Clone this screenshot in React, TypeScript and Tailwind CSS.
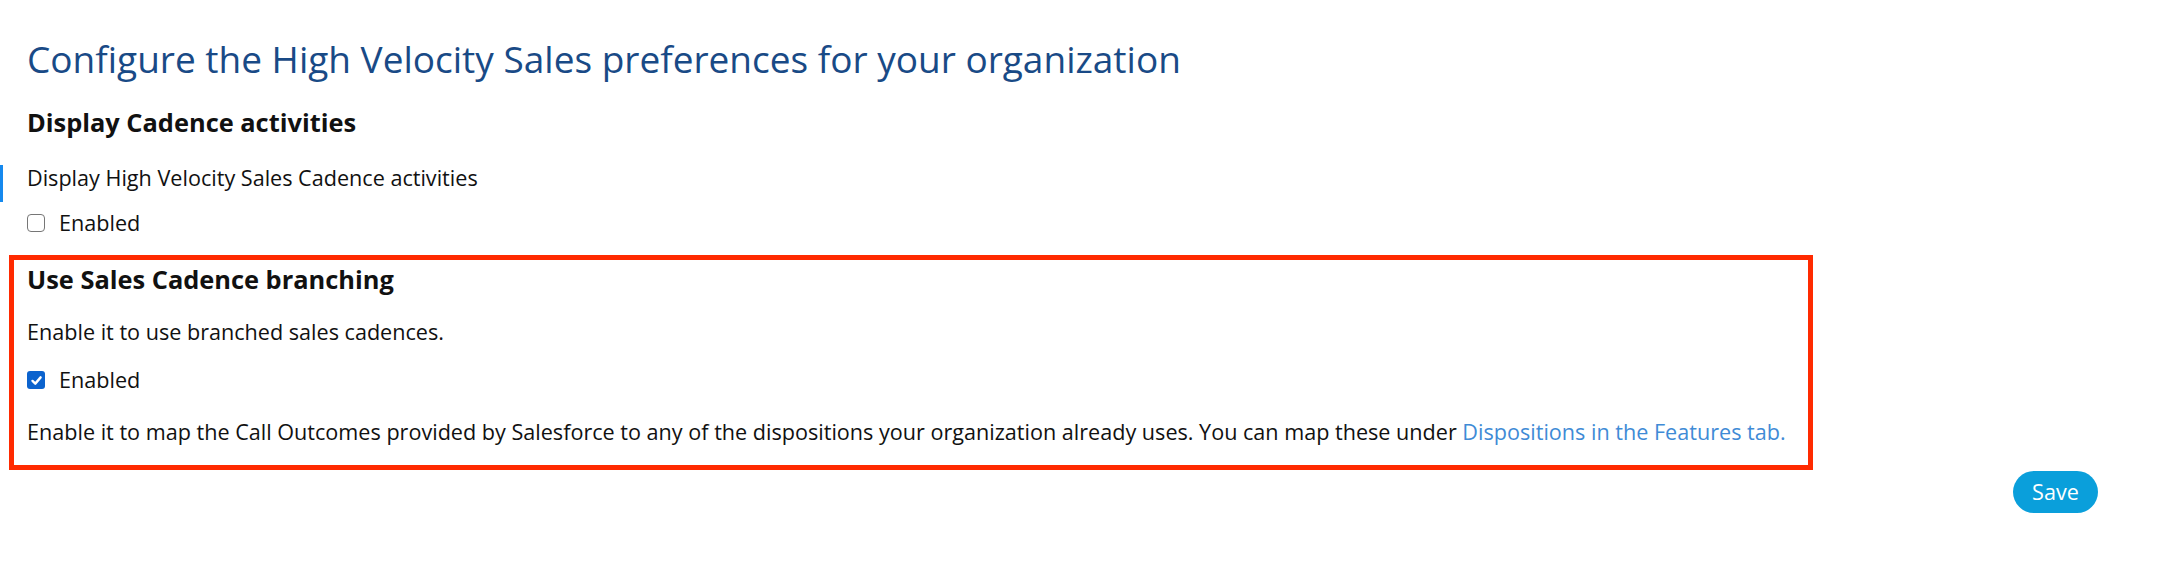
import React from "react";

function Check({ checked }: { checked: boolean }) {
  if (checked) {
    return (
      <span className="inline-flex h-[18px] w-[18px] shrink-0 items-center justify-center rounded-[3px] bg-[#0b63ce]">
        <svg viewBox="0 0 12 12" className="h-[13px] w-[13px]">
          <path d="M2.3 6.4 L4.9 8.9 L9.8 3.1" fill="none" stroke="#fff" strokeWidth="2.2" strokeLinecap="round" strokeLinejoin="round" />
        </svg>
      </span>
    );
  }
  return <span className="inline-block h-[18px] w-[18px] shrink-0 rounded-[4px] border-[1.5px] border-[#767676] bg-white" />;
}

export default function App() {
  return (
    <div className="min-h-[572px] w-full bg-white px-[9px] text-[#111] [font-family:'Open_Sans',sans-serif]">
      <div className="pt-[34px]">
        <h1 className="ml-[18px] text-[37px] font-normal leading-[50px] text-[#194a86]">
          Configure the High Velocity Sales preferences for your organization
        </h1>
        <h2 className="ml-[18px] mt-[23px] text-[25.4px] font-bold leading-[30px]">Display Cadence activities</h2>
        <div className="mt-[26px] -ml-[9px] flex h-[30px] items-start">
          <div className="mt-[2px] h-[37px] w-[3px] shrink-0 bg-[#1589ee]" />
          <p className="ml-[24px] text-[21.6px] leading-[30px]">Display High Velocity Sales Cadence activities</p>
        </div>
        <label className="ml-[18px] mt-[15px] flex h-[30px] items-center text-[21.6px]">
          <Check checked={false} />
          <span className="ml-[14px]">Enabled</span>
        </label>
        <div className="mt-[17px] w-[1804px] border-[5px] border-[#ff2a00] pb-[18px] pl-[13px] pt-[4px]">
          <h2 className="text-[25.4px] font-bold leading-[30px]">Use Sales Cadence branching</h2>
          <p className="mt-[23px] text-[21.6px] leading-[30px]">Enable it to use branched sales cadences.</p>
          <label className="mt-[18px] flex h-[30px] items-center text-[21.6px]">
            <Check checked={true} />
            <span className="ml-[14px]">Enabled</span>
          </label>
          <p className="mt-[22px] text-[21.6px] leading-[30px]">
            Enable it to map the Call Outcomes provided by Salesforce to any of the dispositions your organization already uses. You can map these under{" "}
            <a className="text-[#3f8bd6]">Dispositions in the Features tab.</a>
          </p>
        </div>
        <div className="flex justify-end pr-[51px]">
          <button className="mt-[1px] h-[42px] w-[85px] rounded-full bg-[#0a9fdb] text-[21.6px] text-white">Save</button>
        </div>
      </div>
    </div>
  );
}
